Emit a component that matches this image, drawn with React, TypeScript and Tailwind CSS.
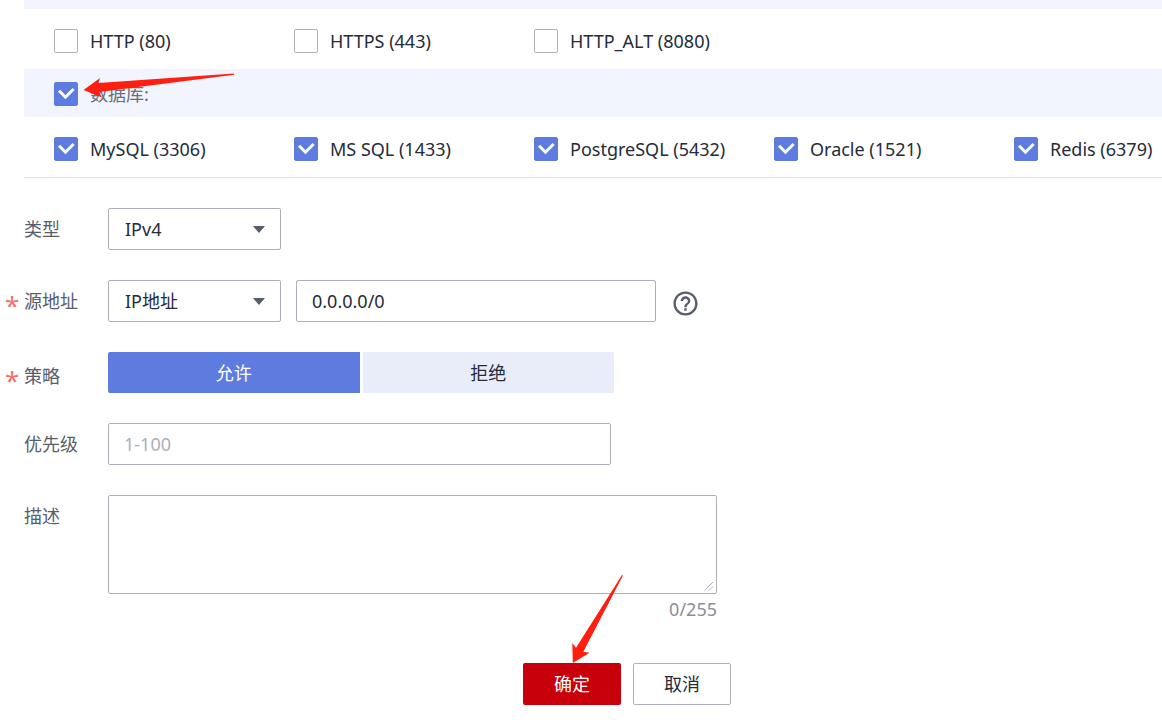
import { useState, type ReactNode } from "react";
import { MdHelpOutline } from "react-icons/md";

const WEB_PORTS = ["HTTP (80)", "HTTPS (443)", "HTTP_ALT (8080)"];
const DB_PORTS = ["MySQL (3306)", "MS SQL (1433)", "PostgreSQL (5432)", "Oracle (1521)", "Redis (6379)"];

const BOX = "rounded-[2px] border border-[#adb0b8] bg-white text-[#252b3a] outline-none focus:border-[#5e7ce0]";

function Checkbox({ label, checked, onChange, muted }: { label: string; checked: boolean; onChange: () => void; muted?: boolean }) {
  return (
    <label className="flex min-w-60 cursor-pointer items-center gap-3 last:min-w-0">
      <span className="grid h-6 w-6 shrink-0">
        <input
          type="checkbox"
          checked={checked}
          onChange={onChange}
          className="peer h-6 w-6 appearance-none rounded-[2px] border border-[#adb0b8] bg-white [grid-area:1/1] checked:border-[#5e7ce0] checked:bg-[#5e7ce0]"
        />
        <svg viewBox="0 0 24 24" className="pointer-events-none invisible h-6 w-6 [grid-area:1/1] peer-checked:visible" aria-hidden>
          <path d="M5 8.7l6.5 6.5L19.6 7" fill="none" stroke="#fff" strokeWidth="3" />
        </svg>
      </span>
      <span className={muted ? "text-[#696e79]" : "text-[#252b3a]"}>{label}</span>
    </label>
  );
}

function Field({ label, id, required, tall, children }: { label: string; id: string; required?: boolean; tall?: boolean; children: ReactNode }) {
  return (
    <div className="flex items-start">
      <label htmlFor={id} className={`flex w-[108px] shrink-0 items-center text-[#575d6c] ${tall ? "h-12" : "h-[42px]"}`}>
        <span className="w-6 shrink-0 pl-[5px] pt-2 text-[26px] text-[#f66f6a]">{required && "*"}</span>
        {label}
      </label>
      {children}
    </div>
  );
}

function Dropdown({ id, options }: { id: string; options: string[] }) {
  return (
    <div className="grid w-[173px] shrink-0 items-center">
      <select id={id} className={`h-[42px] w-full appearance-none pl-4 pr-10 [grid-area:1/1] ${BOX}`}>
        {options.map((option) => (
          <option key={option}>{option}</option>
        ))}
      </select>
      <svg viewBox="0 0 12 7" className="pointer-events-none mr-4 h-[7px] w-3 justify-self-end [grid-area:1/1]" aria-hidden>
        <path d="M0 0h12L6 7z" fill="#575d6c" />
      </svg>
    </div>
  );
}

export default function App() {
  const [ports, setPorts] = useState<string[]>(DB_PORTS);
  const [policy, setPolicy] = useState("允许");
  const [source, setSource] = useState("0.0.0.0/0");
  const [description, setDescription] = useState("");

  const allDb = DB_PORTS.every((p) => ports.includes(p));
  const toggle = (port: string) =>
    setPorts(ports.includes(port) ? ports.filter((p) => p !== port) : [...ports, port]);
  const toggleDb = () => {
    const rest = ports.filter((p) => !DB_PORTS.includes(p));
    setPorts(allDb ? rest : [...rest, ...DB_PORTS]);
  };

  return (
    <main className="relative bg-white pb-6 font-['Noto_Sans','Noto_Sans_CJK_SC',sans-serif] text-[18px] leading-6">
      <section className="ml-6 border-b border-[#dfe1e6]">
        <div className="h-[9px] bg-[#f2f5fe]" />
        <div className="flex flex-wrap gap-y-4 pb-4 pl-[30px] pt-5">
          {WEB_PORTS.map((port) => (
            <Checkbox key={port} label={port} checked={ports.includes(port)} onChange={() => toggle(port)} />
          ))}
        </div>
        <div className="flex h-12 items-center bg-[#f2f5fe] pl-[30px] pt-0.5">
          <Checkbox label="数据库:" checked={allDb} onChange={toggleDb} muted />
        </div>
        <div className="flex flex-wrap gap-y-4 pb-4 pl-[30px] pt-5">
          {DB_PORTS.map((port) => (
            <Checkbox key={port} label={port} checked={ports.includes(port)} onChange={() => toggle(port)} />
          ))}
        </div>
      </section>

      <form className="pt-[30px]" onSubmit={(e) => e.preventDefault()}>
        <div className="flex flex-col gap-[30px]">
          <Field label="类型" id="type">
            <Dropdown id="type" options={["IPv4", "IPv6"]} />
          </Field>
          <Field label="源地址" id="source-kind" required>
            <Dropdown id="source-kind" options={["IP地址", "安全组"]} />
            <input
              aria-label="源地址"
              value={source}
              onChange={(e) => setSource(e.target.value)}
              className={`ml-[15px] h-[42px] w-full max-w-[360px] px-[15px] ${BOX}`}
            />
            <button type="button" aria-label="帮助" className="ml-[15px] mt-[9px] shrink-0 text-[#575d6c]">
              <MdHelpOutline size={29} />
            </button>
          </Field>
          <Field label="策略" id="policy" required tall>
            <div id="policy" className="flex h-[41px] w-full max-w-[506px] gap-[3px]">
              {["允许", "拒绝"].map((name) => (
                <button
                  key={name}
                  type="button"
                  aria-pressed={policy === name}
                  onClick={() => setPolicy(name)}
                  className={`flex-1 first:rounded-l-[2px] last:rounded-r-[2px] ${
                    policy === name ? "bg-[#5e7ce0] text-white" : "bg-[#e9edfa] text-[#252b3a]"
                  }`}
                >
                  {name}
                </button>
              ))}
            </div>
          </Field>
        </div>

        <div className="mt-[23px] flex flex-col gap-[30px]">
          <Field label="优先级" id="priority">
            <input id="priority" placeholder="1-100" className={`h-[42px] w-full max-w-[503px] px-[15px] placeholder:text-[#adb0b8] ${BOX}`} />
          </Field>
          <Field label="描述" id="description">
            <div className="flex w-full max-w-[609px] flex-col">
              <div className="grid">
                <textarea
                  id="description"
                  maxLength={255}
                  value={description}
                  onChange={(e) => setDescription(e.target.value)}
                  className={`h-[99px] w-full resize-none px-[15px] py-2 [grid-area:1/1] ${BOX}`}
                />
                <svg viewBox="0 0 10 10" className="pointer-events-none m-[3px] h-2.5 w-2.5 self-end justify-self-end [grid-area:1/1]" aria-hidden>
                  <path d="M.5 9.5l8.5-8.5M5 9.5L9 5.5" fill="none" stroke="#adb0b8" />
                </svg>
              </div>
              <span className="mt-[3px] text-right text-[#8a8e99]">{description.length}/255</span>
            </div>
          </Field>
        </div>

        <div className="mt-[42px] flex max-w-[731px] justify-end gap-3">
          <button type="submit" className="h-[42px] w-[98px] rounded-[2px] bg-[#c7000b] text-white">
            确定
          </button>
          <button type="button" className={`h-[42px] w-[98px] ${BOX}`}>
            取消
          </button>
        </div>
      </form>

      {/* Hand-drawn pointers over the form */}
      <svg className="pointer-events-none absolute left-[83px] top-[73px] h-[25px] w-[152px]" viewBox="83 73 152 25" aria-hidden>
        <path d="M83.5 90L100 78L98.5 83L234 73.5V74.7L99 92L102 97.5z" fill="#ff1e10" />
      </svg>
      <svg className="pointer-events-none absolute left-[572px] top-[574px] h-[90px] w-[52px]" viewBox="572 574 52 90" aria-hidden>
        <path d="M572.8 663L572.3 643L576 647.7L622 575L623 575.6L583.3 651.8L589.5 652.7z" fill="#ff1e10" />
      </svg>
    </main>
  );
}
